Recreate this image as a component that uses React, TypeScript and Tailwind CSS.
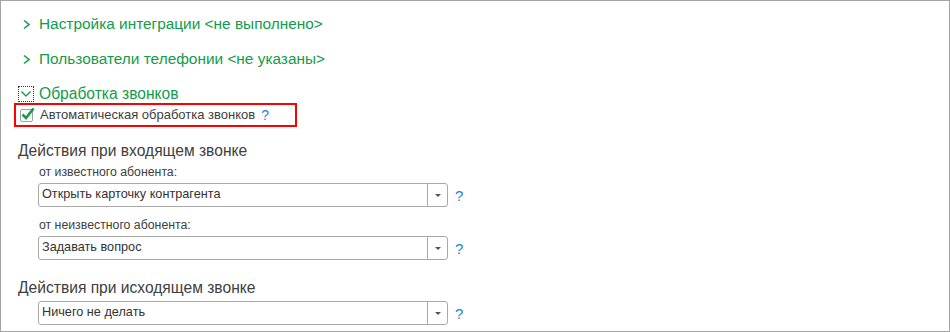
import React from "react";

const green = "text-[#129c4a]";

function ChevronRight() {
  return (
    <svg width="9" height="11" viewBox="0 0 9 11" className="shrink-0">
      <path d="M2 1.5 L7 5.5 L2 9.5" fill="none" stroke="#129c4a" strokeWidth="1.6" />
    </svg>
  );
}

function Select({ value }: { value: string }) {
  return (
    <div className="flex items-center">
      <div className="w-[410px] h-[24px] border border-[#a9a9a9] rounded-[3px] flex items-stretch bg-white">
        <div className="flex-1 flex items-center pl-[3px] text-[12.7px] text-[#333333]">{value}</div>
        <div className="w-[20px] border-l border-[#a9a9a9] flex items-center justify-center">
          <div className="w-0 h-0 border-l-[3px] border-r-[3px] border-t-[3px] border-l-transparent border-r-transparent border-t-[#555555]" />
        </div>
      </div>
      <span className="ml-[7px] text-[15px] text-[#2a7fd4] leading-none">?</span>
    </div>
  );
}

function Field({ label, value, top }: { label?: string; value: string; top: string }) {
  return (
    <div className={`${top} pl-[37px] flex flex-col`}>
      {label && (
        <div className="h-[16px] mb-[3px] flex items-center">
          <span className="ml-[1px] text-[12.3px] text-[#404040]">{label}</span>
        </div>
      )}
      <Select value={value} />
    </div>
  );
}

export default function App() {
  return (
    <div className="w-[950px] h-[332px] bg-white border border-[#a3a3a3] overflow-hidden font-['Liberation_Sans',Arial,sans-serif]">
      {/* Row 1 */}
      <div className={`mt-[11px] h-[24px] flex items-center pl-[21px] ${green}`}>
        <ChevronRight />
        <span className="ml-[8px] text-[15.4px]">Настройка интеграции &lt;не выполнено&gt;</span>
      </div>
      {/* Row 2 */}
      <div className={`mt-[11px] h-[24px] flex items-center pl-[21px] ${green}`}>
        <ChevronRight />
        <span className="ml-[8px] text-[15.4px]">Пользователи телефонии &lt;не указаны&gt;</span>
      </div>
      {/* Row 3 */}
      <div className={`mt-[13px] h-[19px] flex items-center pl-[17px] ${green}`}>
        <div className="w-[16px] h-[16px] border border-dotted border-[#333333] flex items-center justify-center">
          <svg width="12" height="8" viewBox="0 0 12 8">
            <path d="M1.5 1.5 L6 6 L10.5 1.5" fill="none" stroke="#129c4a" strokeWidth="1.4" />
          </svg>
        </div>
        <span className="ml-[5px] text-[15.6px]">Обработка звонков</span>
      </div>
      {/* Red box */}
      <div className="ml-[13px] w-[283px] h-[24px] border-2 border-[#ff0000] flex items-center pl-[4px]">
        <div className="relative w-[13px] h-[13px] border border-[#a0a0a0] rounded-[2px] bg-white">
          <svg width="16" height="16" viewBox="0 0 16 16" className="absolute left-[-1px] top-[-4px]">
            <path d="M2.5 8.5 L6 12 L13.5 2.5" fill="none" stroke="#129c4a" strokeWidth="2.6" />
          </svg>
        </div>
        <span className="ml-[7px] text-[13px] text-[#404040]">Автоматическая обработка звонков</span>
        <span className="ml-[6px] text-[14px] text-[#2a7fd4]">?</span>
      </div>
      {/* Incoming */}
      <div className="mt-[14px] h-[20px] flex items-center pl-[17px] text-[15.6px] text-[#404040]">
        Действия при входящем звонке
      </div>
      <Field top="mt-[3px]" label="от известного абонента:" value="Открыть карточку контрагента" />
      <Field top="mt-[10px]" label="от неизвестного абонента:" value="Задавать вопрос" />
      {/* Outgoing */}
      <div className="mt-[18px] h-[20px] flex items-center pl-[17px] text-[15.6px] text-[#404040]">
        Действия при исходящем звонке
      </div>
      <Field top="mt-[3px]" value="Ничего не делать" />
    </div>
  );
}
